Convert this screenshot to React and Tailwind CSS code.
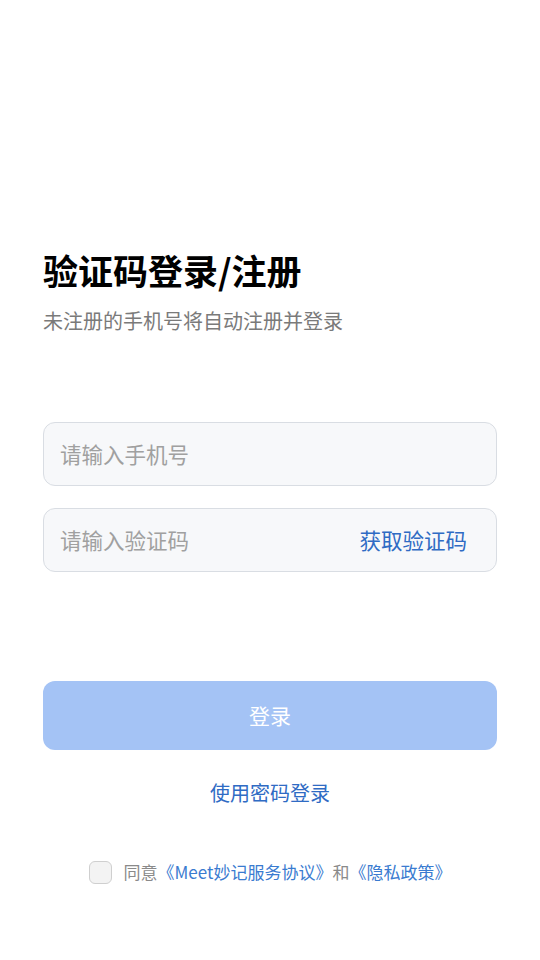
import React, { useState } from "react";

const font = { fontFamily: '"Noto Sans CJK SC", "Noto Sans", sans-serif' };

function App() {
  const [phone, setPhone] = useState("");
  const [code, setCode] = useState("");
  const [agreed, setAgreed] = useState(false);

  return (
    <div
      className="min-h-[960px] w-[540px] bg-white flex flex-col px-[43px]"
      style={font}
    >
      <h1 className="mt-[250px] text-[35px] leading-[40px] font-bold text-black">
        验证码登录/注册
      </h1>
      <p className="mt-[17px] text-[20px] leading-[28px] text-[#7a7a7a]">
        未注册的手机号将自动注册并登录
      </p>

      <div className="mt-[87px] h-[64px] rounded-[12px] border border-[#d9dde3] bg-[#f7f8fa] flex items-center px-[16px]">
        <input
          value={phone}
          onChange={(e) => setPhone(e.target.value)}
          placeholder="请输入手机号"
          className="w-full bg-transparent outline-none text-[21.5px] text-[#333] placeholder:text-[#a0a0a0]"
        />
      </div>

      <div className="mt-[22px] h-[64px] rounded-[12px] border border-[#d9dde3] bg-[#f7f8fa] flex items-center pl-[16px] pr-[29px]">
        <input
          value={code}
          onChange={(e) => setCode(e.target.value)}
          placeholder="请输入验证码"
          className="flex-1 min-w-0 bg-transparent outline-none text-[21.5px] text-[#333] placeholder:text-[#a0a0a0]"
        />
        <button className="text-[21.5px] text-[#2f6bc4] shrink-0">获取验证码</button>
      </div>

      <button className="mt-[109px] h-[69px] rounded-[12px] bg-[#a4c3f5] text-white text-[21px]">
        登录
      </button>

      <button className="mt-[29px] text-[20px] leading-[28px] text-[#2f6bc4] self-center">
        使用密码登录
      </button>

      <div className="mt-[53px] flex items-center justify-center gap-[12px]">
        <button
          onClick={() => setAgreed(!agreed)}
          className="w-[23px] h-[23px] rounded-[6px] border border-[#cfcfcf] bg-[#f3f3f3]"
        />
        <p className="text-[17px] leading-[24px] text-[#8a8a8a]">
          同意<span className="text-[#3a7bd0]">《Meet妙记服务协议》</span>和
          <span className="text-[#3a7bd0]">《隐私政策》</span>
        </p>
      </div>
    </div>
  );
}

export default App;
